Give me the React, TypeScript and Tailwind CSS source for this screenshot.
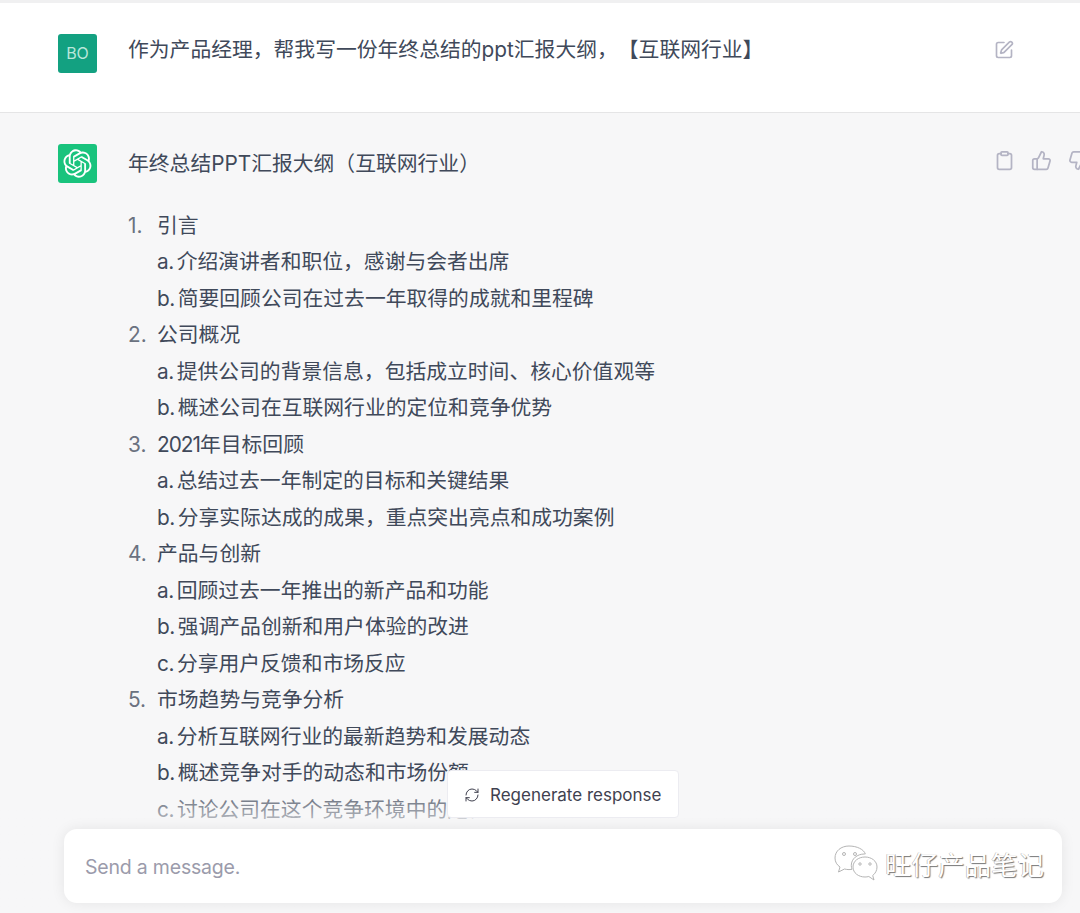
import React from 'react';
import { SquarePen, Clipboard, ThumbsUp, ThumbsDown, RefreshCw } from 'lucide-react';

const outline = [
  {
    title: <>引言</>,
    items: [['a.', '介绍演讲者和职位，感谢与会者出席'], ['b.', '简要回顾公司在过去一年取得的成就和里程碑']],
  },
  {
    title: <>公司概况</>,
    items: [['a.', '提供公司的背景信息，包括成立时间、核心价值观等'], ['b.', '概述公司在互联网行业的定位和竞争优势']],
  },
  {
    title: <><span className="tracking-[-1px]">2021</span>年目标回顾</>,
    items: [['a.', '总结过去一年制定的目标和关键结果'], ['b.', '分享实际达成的成果，重点突出亮点和成功案例']],
  },
  {
    title: <>产品与创新</>,
    items: [['a.', '回顾过去一年推出的新产品和功能'], ['b.', '强调产品创新和用户体验的改进'], ['c.', '分享用户反馈和市场反应']],
  },
  {
    title: <>市场趋势与竞争分析</>,
    items: [['a.', '分析互联网行业的最新趋势和发展动态'], ['b.', '概述竞争对手的动态和市场份额'], ['c.', '讨论公司在这个竞争环境中的定位']],
  },
];

const OpenAILogo = () => (
  <svg width="29" height="29" viewBox="0 0 41 41" fill="none">
    <path
      fill="currentColor"
      d="M37.5324 16.8707C37.9808 15.5241 38.1363 14.0974 37.9886 12.6859C37.8409 11.2744 37.3934 9.91076 36.676 8.68622C35.6126 6.83404 33.9882 5.3676 32.0373 4.4985C30.0864 3.62941 27.9098 3.40259 25.8215 3.85078C24.8796 2.7893 23.7219 1.94125 22.4257 1.36341C21.1295 0.785575 19.7249 0.491269 18.3058 0.500197C16.1708 0.495044 14.0893 1.16803 12.3614 2.42214C10.6335 3.67624 9.34853 5.44666 8.6917 7.47815C7.30085 7.76286 5.98686 8.3414 4.8377 9.17505C3.68854 10.0087 2.73073 11.0782 2.02839 12.312C0.956464 14.1591 0.498905 16.2988 0.721698 18.4228C0.944492 20.5467 1.83612 22.5449 3.268 24.1293C2.81966 25.4759 2.66413 26.9026 2.81182 28.3141C2.95951 29.7256 3.40701 31.0892 4.12437 32.3138C5.18791 34.1659 6.8123 35.6322 8.76321 36.5013C10.7141 37.3704 12.8907 37.5973 14.9789 37.1492C15.9208 38.2107 17.0786 39.0587 18.3747 39.6366C19.6709 40.2144 21.0755 40.5087 22.4946 40.4998C24.6307 40.5054 26.7133 39.8321 28.4418 38.5772C30.1704 37.3223 31.4556 35.5506 32.1119 33.5179C33.5027 33.2332 34.8167 32.6547 35.9659 31.821C37.115 30.9874 38.0728 29.9178 38.7752 28.684C39.8458 26.8371 40.3023 24.6979 40.0789 22.5748C39.8556 20.4517 38.9639 18.4544 37.5324 16.8707ZM22.4978 37.8849C20.7443 37.8874 19.0459 37.2733 17.6994 36.1501C17.7601 36.117 17.8666 36.0586 17.936 36.0161L25.9004 31.4156C26.1003 31.3019 26.2663 31.137 26.3813 30.9378C26.4964 30.7386 26.5563 30.5124 26.5549 30.2825V19.0542L29.9213 20.998C29.9389 21.0068 29.9541 21.0198 29.9656 21.0359C29.977 21.052 29.9842 21.0707 29.9867 21.0902V30.3889C29.9842 32.375 29.1946 34.2791 27.7909 35.6841C26.3872 37.0892 24.4838 37.8806 22.4978 37.8849ZM6.39227 31.0064C5.51397 29.4888 5.19742 27.7107 5.49804 25.9832C5.55718 26.0187 5.66048 26.0818 5.73461 26.1244L13.699 30.7248C13.8975 30.8408 14.1233 30.902 14.3532 30.902C14.583 30.902 14.8088 30.8408 15.0073 30.7248L24.731 25.1103V28.9979C24.7321 29.0177 24.7283 29.0376 24.7199 29.0556C24.7115 29.0736 24.6988 29.0893 24.6829 29.1012L16.6317 33.7497C14.9096 34.7416 12.8643 35.0097 10.9447 34.4954C9.02506 33.9811 7.38785 32.7263 6.39227 31.0064ZM4.29707 13.6194C5.17156 12.0998 6.55279 10.9364 8.19885 10.3327C8.19885 10.4013 8.19491 10.5228 8.19491 10.6071V19.808C8.19351 20.0378 8.25334 20.2638 8.36823 20.4629C8.48312 20.6619 8.64893 20.8267 8.84863 20.9404L18.5723 26.5542L15.206 28.4979C15.1894 28.5089 15.1703 28.5155 15.1505 28.5173C15.1307 28.5191 15.1107 28.516 15.0924 28.5082L7.04046 23.8557C5.32135 22.8601 4.06716 21.2235 3.55289 19.3046C3.03862 17.3858 3.30624 15.3413 4.29707 13.6194ZM31.955 20.0556L22.2312 14.4411L25.5976 12.4981C25.6142 12.4872 25.6333 12.4805 25.6531 12.4787C25.6729 12.4769 25.6928 12.4801 25.7111 12.4879L33.7631 17.1364C34.9967 17.849 36.0017 18.8982 36.6606 20.1613C37.3194 21.4244 37.6047 22.849 37.4832 24.2684C37.3617 25.6878 36.8382 27.0432 35.9743 28.1759C35.1103 29.3086 33.9415 30.1717 32.6047 30.6641C32.6047 30.5947 32.6047 30.4733 32.6047 30.3889V21.188C32.6066 20.9586 32.5474 20.7328 32.4332 20.5338C32.319 20.3348 32.154 20.1698 31.955 20.0556ZM35.3055 15.0128C35.2464 14.9765 35.1431 14.9142 35.069 14.8717L27.1045 10.2712C26.906 10.1554 26.6803 10.0943 26.4504 10.0943C26.2206 10.0943 25.9948 10.1554 25.7963 10.2712L16.0726 15.8858V11.9982C16.0715 11.9783 16.0753 11.9585 16.0837 11.9405C16.0921 11.9225 16.1048 11.9068 16.1207 11.8949L24.1719 7.25025C25.4053 6.53903 26.8158 6.19376 28.2383 6.25482C29.6608 6.31589 31.0364 6.78077 32.2044 7.59508C33.3723 8.40939 34.2842 9.53945 34.8334 10.8531C35.3826 12.1667 35.5464 13.6095 35.3055 15.0128ZM14.2424 21.9419L10.8752 19.9981C10.8576 19.9893 10.8423 19.9763 10.8309 19.9602C10.8195 19.9441 10.8122 19.9254 10.8098 19.9058V10.6071C10.8107 9.18295 11.2173 7.78848 11.9819 6.58696C12.7466 5.38544 13.8377 4.42659 15.1275 3.82264C16.4173 3.21869 17.8524 2.99464 19.2649 3.1767C20.6775 3.35876 22.0089 3.93941 23.1034 4.85067C23.0427 4.88379 22.937 4.94215 22.8668 4.98473L14.9024 9.58517C14.7025 9.69878 14.5366 9.86356 14.4215 10.0626C14.3065 10.2616 14.2466 10.4877 14.2479 10.7175L14.2424 21.9419ZM16.071 17.9991L20.4018 15.4978L24.7325 17.9975V22.9985L20.4018 25.4983L16.071 22.9985V17.9991Z"
    />
  </svg>
);

const WeChatMark = () => (
  <svg width="46" height="42" viewBox="0 0 46 42" fill="#fff" stroke="#b5b5b5" strokeWidth="1">
    <path d="M16 2C8 2 2 7 2 14c0 4 2 7 5 9l-1.500 5 6-3c1.500.4 3 .6 4.500.6 1 0 2-.1 3-.3-.5-1.300-.7-2.600-.7-4 0-6.500 6-11.300 13-11.300h1C31 5.500 24 2 16 2Z" />
    <path d="M44 23c0-6-5.500-10-12-10s-12 4-12 10 5.500 10 12 10c1.300 0 2.600-.2 3.800-.5L41 36l-1.300-4.500C42.300 29.500 44 26.500 44 23Z" />
    <circle cx="11" cy="10" r="1.500" />
    <circle cx="22" cy="10" r="1.500" />
    <circle cx="27" cy="20" r="1.200" />
    <circle cx="37" cy="20" r="1.200" />
  </svg>
);

export default function App() {
  return (
    <div className="relative h-[913px] w-[1080px] overflow-hidden bg-[#f7f7f8] font-['Inter','Noto_Sans_CJK_SC',sans-serif] text-[20.8px] leading-[36.5px] text-[#40495a] [text-spacing-trim:space-all]">
      <div className="h-[3px] bg-[#f0f0f1]" />

      {/* user message */}
      <div className="flex h-[110px] border-b border-[#e5e5e6] bg-white pl-[58px] pt-[31px]">
        <div className="flex h-[39px] w-[39px] shrink-0 items-center justify-center rounded-[3px] bg-[#13a181] text-[16px] text-[#b9e6da]">
          BO
        </div>
        <p className="ml-[31px] w-[866px] shrink-0 -translate-y-[2px]">
          作为产品经理，帮我写一份年终总结的ppt汇报大纲，【互联网行业】
        </p>
        <SquarePen size={20} strokeWidth={2} className="mt-[6px] shrink-0 text-[#b4b4c4]" />
      </div>

      {/* assistant answer */}
      <div className="flex pl-[58px] pt-[31px]">
        <div className="flex h-[39px] w-[39px] shrink-0 items-center justify-center rounded-[3px] bg-[#19c37d] text-white">
          <OpenAILogo />
        </div>
        <div className="ml-[31px] w-[866px] shrink-0 pt-[2px]">
          <p>年终总结PPT汇报大纲（互联网行业）</p>
          <ol className="mt-[25px]">
            {outline.map((section, i) => (
              <li key={i} className="flex">
                <span className="w-[29px] shrink-0 text-[#6b7280]">{i + 1}.</span>
                <div>
                  <div>{section.title}</div>
                  {section.items.map(([mark, text]) => (
                    <div key={mark} className="flex gap-[3px]">
                      <span className="tracking-[-0.5px]">{mark}</span>
                      <span>{text}</span>
                    </div>
                  ))}
                </div>
              </li>
            ))}
          </ol>
        </div>
        <div className="mt-[6px] flex shrink-0 gap-[16px] text-[#b4b4c4]">
          <Clipboard size={21} strokeWidth={2} />
          <ThumbsUp size={21} strokeWidth={2} />
          <ThumbsDown size={21} strokeWidth={2} />
        </div>
      </div>

      {/* fade over the end of the answer */}
      <div className="absolute inset-x-0 bottom-0 h-[130px] bg-gradient-to-b from-[#f7f7f800] via-[#f7f7f8] via-45% to-[#f7f7f8]" />

      <button className="absolute left-[447px] top-[770px] flex h-[48px] w-[232px] items-center rounded-[4px] border border-[#ececf1] bg-white pl-[16px] pt-[2px] text-[17px] leading-none text-[#40414f]">
        <RefreshCw size={16} strokeWidth={1.5} className="mr-[10px]" />
        Regenerate response
      </button>

      <div className="absolute left-[64px] top-[829px] flex h-[74px] w-[998px] items-center rounded-[13px] bg-white pl-[21px] pt-[2px] text-[19.5px] tracking-[-0.2px] text-[#9b9bab] shadow-[0_0_14px_rgba(0,0,0,0.08)]">
        Send a message.
      </div>

      {/* watermark */}
      <div className="absolute left-[833px] top-[844px] flex items-center">
        <WeChatMark />
        <span className="ml-[6px] text-[26.5px] leading-none text-white [text-shadow:1px_1px_1px_#777,-0.5px_0_0.5px_#aaa]">
          旺仔产品笔记
        </span>
      </div>
    </div>
  );
}
